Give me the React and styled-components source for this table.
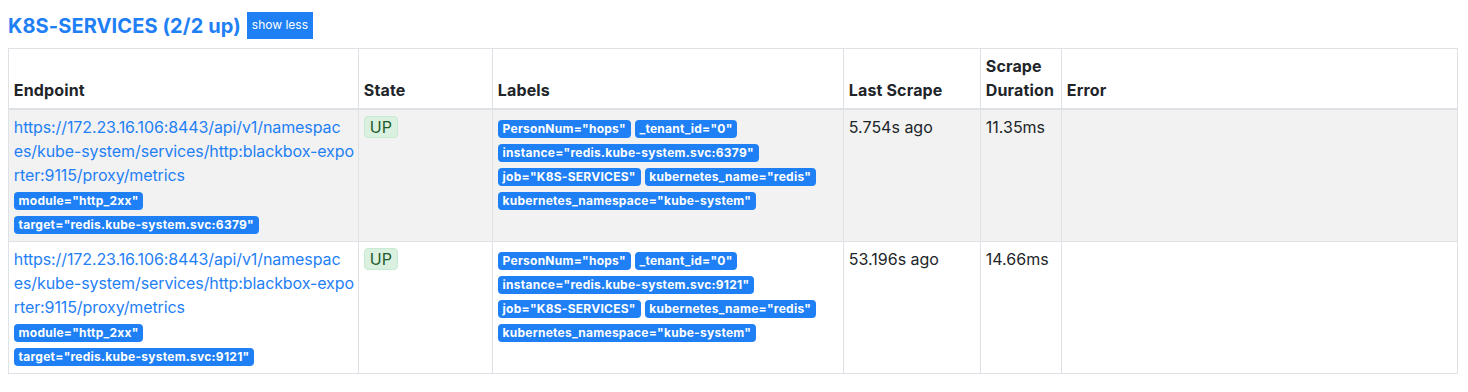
import React from "react";
import styled, { createGlobalStyle } from "styled-components";

const Global = createGlobalStyle`
  body {
    margin: 8px;
    font-family: Inter, "Noto Sans", "Liberation Sans", sans-serif;
    font-size: 16px;
    line-height: 1.5;
    color: #212529;
    background: #fff;
  }
  * { box-sizing: border-box; }
`;

const BLUE = "#1f80f5";

const Section = styled.section`
  width: calc(100% - 2px);
`;

const TitleRow = styled.div`
  display: flex;
  align-items: center;
  gap: 6px;
  margin: 4px 0 9px;
`;

const Title = styled.h2`
  margin: 0;
  font-size: 20px;
  font-weight: 700;
  line-height: 1.2;
  letter-spacing: 0.1px;
  color: ${BLUE};
`;

const ToggleButton = styled.button`
  font-family: inherit;
  font-size: 12px;
  line-height: 18px;
  padding: 3px 4px 4px;
  border: 1px solid ${BLUE};
  border-radius: 0;
  background: ${BLUE};
  color: #fff;
  cursor: pointer;
`;

const Table = styled.table`
  width: 100%;
  border-collapse: collapse;
  table-layout: fixed;
  border: 1px solid #dee2e6;
`;

const Th = styled.th`
  text-align: left;
  vertical-align: bottom;
  font-weight: 700;
  letter-spacing: 0.15px;
  padding: 5.3px 4.8px;
  border: 1px solid #dee2e6;
  border-bottom: 2px solid #dee2e6;
`;

const Row = styled.tr`
  background: ${(p) => (p.$striped ? "#f2f2f2" : "#fff")};
`;

const Td = styled.td`
  vertical-align: top;
  padding: 5.5px 4.8px;
  border: 1px solid #dee2e6;
`;

const EndpointLink = styled.a`
  color: ${BLUE};
  text-decoration: none;
  letter-spacing: -0.1px;
  white-space: nowrap;
`;

const BadgeLine = styled.div``;

const Badge = styled.span`
  display: inline-block;
  font-size: 12px;
  font-weight: 700;
  line-height: 1;
  letter-spacing: 0.25px;
  padding: 3px 4.8px;
  margin-right: 4px;
  border-radius: 4px;
  background: ${BLUE};
  color: #fff;
  white-space: nowrap;
`;

const HealthBadge = styled.span`
  display: inline-block;
  font-size: 16px;
  line-height: 1;
  padding: 2px 5px;
  border-radius: 4px;
  border: 1px solid #c9ead2;
  background: #d9f1de;
  color: #1f5a2b;
`;

const endpointParts = [
  "https://172.23.16.106:8443/api/v1/namespac",
  "es/kube-system/services/http:blackbox-expo",
  "rter:9115/proxy/metrics",
];

const targets = [
  {
    params: ['module="http_2xx"', 'target="redis.kube-system.svc:6379"'],
    labels: [
      'PersonNum="hops"',
      '_tenant_id="0"',
      'instance="redis.kube-system.svc:6379"',
      'job="K8S-SERVICES"',
      'kubernetes_name="redis"',
      'kubernetes_namespace="kube-system"',
    ],
    last: "5.754s ago",
    duration: "11.35ms",
  },
  {
    params: ['module="http_2xx"', 'target="redis.kube-system.svc:9121"'],
    labels: [
      'PersonNum="hops"',
      '_tenant_id="0"',
      'instance="redis.kube-system.svc:9121"',
      'job="K8S-SERVICES"',
      'kubernetes_name="redis"',
      'kubernetes_namespace="kube-system"',
    ],
    last: "53.196s ago",
    duration: "14.66ms",
  },
];

function Endpoint() {
  return (
    <EndpointLink href="#">
      {endpointParts.map((part, i) => (
        <React.Fragment key={i}>
          {i > 0 && <br />}
          {part}
        </React.Fragment>
      ))}
    </EndpointLink>
  );
}

export default function App() {
  return (
    <>
      <Global />
      <Section>
        <TitleRow>
          <Title>K8S-SERVICES (2/2 up)</Title>
          <ToggleButton>show less</ToggleButton>
        </TitleRow>
        <Table>
          <colgroup>
            <col style={{ width: 350 }} />
            <col style={{ width: 134 }} />
            <col style={{ width: 351 }} />
            <col style={{ width: 137 }} />
            <col style={{ width: 81 }} />
            <col />
          </colgroup>
          <thead>
            <tr>
              <Th>Endpoint</Th>
              <Th>State</Th>
              <Th>Labels</Th>
              <Th>Last Scrape</Th>
              <Th>Scrape Duration</Th>
              <Th>Error</Th>
            </tr>
          </thead>
          <tbody>
            {targets.map((t, i) => (
              <Row key={i} $striped={i % 2 === 0}>
                <Td>
                  <Endpoint />
                  <BadgeLine>
                    {t.params.map((p) => (
                      <Badge key={p}>{p}</Badge>
                    ))}
                  </BadgeLine>
                </Td>
                <Td>
                  <HealthBadge>UP</HealthBadge>
                </Td>
                <Td>
                  {t.labels.map((l) => (
                    <Badge key={l}>{l}</Badge>
                  ))}
                </Td>
                <Td>{t.last}</Td>
                <Td>{t.duration}</Td>
                <Td />
              </Row>
            ))}
          </tbody>
        </Table>
      </Section>
    </>
  );
}
